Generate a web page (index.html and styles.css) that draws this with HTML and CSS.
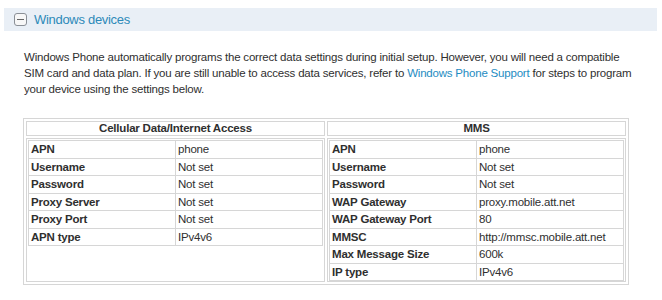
FILE: index.html
```html
<!DOCTYPE html>
<html lang="en">
<head>
    <meta charset="UTF-8">
    <title>Windows devices</title>
    <link rel="stylesheet" href="styles.css">
</head>
<body>
    <div class="section-header">
        <span class="toggle"></span>
        <span class="section-title">Windows devices</span>
    </div>

    <p class="intro">
        Windows Phone automatically programs the correct data settings during initial setup. However, you will need a compatible<br>
        SIM card and data plan. If you are still unable to access data services, refer to <a href="#">Windows Phone Support</a> for steps to program<br>
        your device using the settings below.
    </p>

    <table class="settings">
        <tr>
            <th>Cellular Data/Internet Access</th>
            <th>MMS</th>
        </tr>
        <tr>
            <td>
                <table class="inner">
                    <tr><td class="label">APN</td><td>phone</td></tr>
                    <tr><td class="label">Username</td><td>Not set</td></tr>
                    <tr><td class="label">Password</td><td>Not set</td></tr>
                    <tr><td class="label">Proxy Server</td><td>Not set</td></tr>
                    <tr><td class="label">Proxy Port</td><td>Not set</td></tr>
                    <tr><td class="label">APN type</td><td>IPv4v6</td></tr>
                </table>
            </td>
            <td>
                <table class="inner">
                    <tr><td class="label">APN</td><td>phone</td></tr>
                    <tr><td class="label">Username</td><td>Not set</td></tr>
                    <tr><td class="label">Password</td><td>Not set</td></tr>
                    <tr><td class="label">WAP Gateway</td><td>proxy.mobile.att.net</td></tr>
                    <tr><td class="label">WAP Gateway Port</td><td>80</td></tr>
                    <tr><td class="label">MMSC</td><td>http://mmsc.mobile.att.net</td></tr>
                    <tr><td class="label">Max Message Size</td><td>600k</td></tr>
                    <tr><td class="label">IP type</td><td>IPv4v6</td></tr>
                </table>
            </td>
        </tr>
    </table>
</body>
</html>
```

FILE: styles.css
```css
body {
    font-family: "Liberation Sans", Arial, sans-serif;
    font-size: 11.5px;
    letter-spacing: -0.2px;
    color: #2f2f2f;
    margin: 0;
    padding: 8px 5px 0 4px;
    background-color: #fff;
}
.section-header {
    display: flex;
    align-items: center;
    height: 23px;
    padding-left: 10px;
    background-color: #e9eff6;
}
.toggle {
    position: relative;
    width: 11px;
    height: 11px;
    border: 1px solid #8a8f96;
    border-radius: 3px;
    background-color: #f7f7f7;
    margin-right: 7px;
}
.toggle::after {
    content: "";
    position: absolute;
    left: 2px;
    right: 2px;
    top: 5px;
    height: 1px;
    background-color: #666;
}
.section-title {
    font-size: 13px;
    letter-spacing: -0.3px;
    color: #2d8ab9;
}
.intro {
    margin: 18px 0 0 20px;
    width: 640px;
    line-height: 16px;
}
.intro a {
    color: #1e8cc2;
    text-decoration: none;
}
.settings {
    margin: 21px 0 0 19px;
    width: 606px;
    border: 1px solid #d6d6d6;
    border-spacing: 2px;
}
.settings th {
    border: 1px solid #d6d6d6;
    font-weight: bold;
    text-align: center;
    padding: 0;
    height: 13px;
    line-height: 13px;
    width: 50%;
}
.settings > tbody > tr > td {
    border: 1px solid #d6d6d6;
    vertical-align: top;
    padding: 1px 1px 0 1px;
}
.inner {
    width: 100%;
    border: 1px solid #d6d6d6;
    border-collapse: collapse;
}
.inner td {
    border: 1px solid #d6d6d6;
    padding: 1px 2px;
    line-height: 14.5px;
    width: 50%;
}
.inner td.label {
    font-weight: bold;
}
```
